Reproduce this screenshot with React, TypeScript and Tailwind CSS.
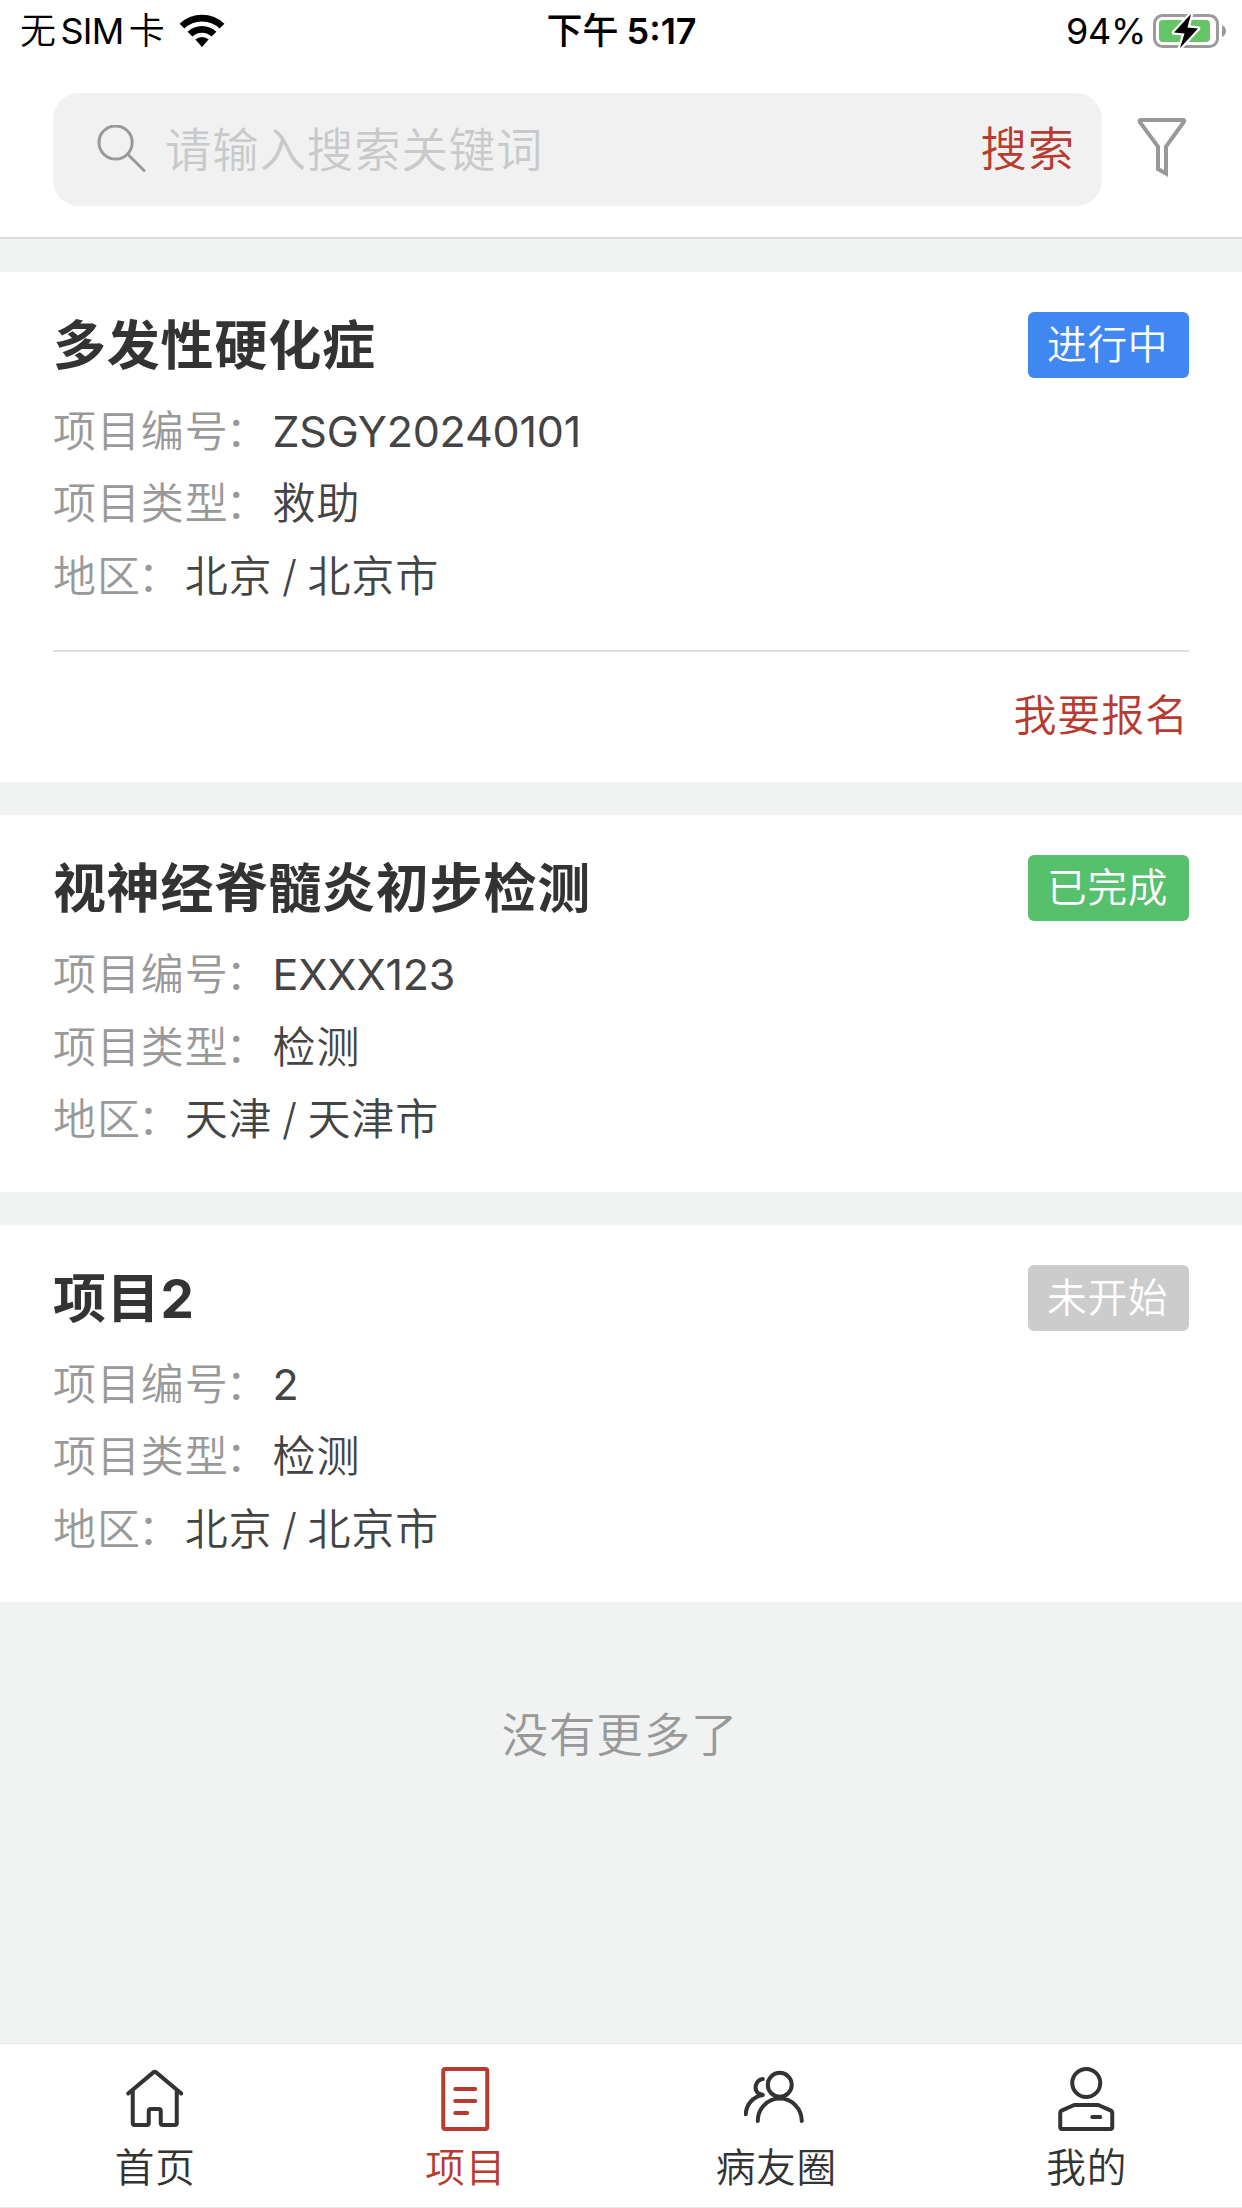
import React from 'react';

type ProjectStatus = 'ongoing' | 'finished' | 'pending';

interface Project {
    name: string;
    code: string;
    type: string;
    region: string;
    status: ProjectStatus;
    canApply?: boolean;
}

const projects: Project[] = [
    { name: '多发性硬化症', code: 'ZSGY20240101', type: '救助', region: '北京 / 北京市', status: 'ongoing', canApply: true },
    { name: '视神经脊髓炎初步检测', code: 'EXXX123', type: '检测', region: '天津 / 天津市', status: 'finished' },
    { name: '项目2', code: '2', type: '检测', region: '北京 / 北京市', status: 'pending' },
];

const statusMap: Record<ProjectStatus, { label: string; className: string }> = {
    ongoing: { label: '进行中', className: 'bg-[#4087f2]' },
    finished: { label: '已完成', className: 'bg-[#57c06c]' },
    pending: { label: '未开始', className: 'bg-[#cccccc]' },
};

const WifiIcon = () => (
    <svg width="46" height="34" viewBox="0 0 46 34" fill="currentColor">
        <path d="M0.6 9.8 A32 32 0 0 1 45.4 9.8 L40.6 14.6 A25.2 25.2 0 0 0 5.4 14.6 Z" />
        <path d="M8.6 17.8 A20.8 20.8 0 0 1 37.4 17.8 L32.6 22.6 A14 14 0 0 0 13.4 22.6 Z" />
        <path d="M16.4 25.6 A9.6 9.6 0 0 1 29.6 25.6 L23 33 Z" />
    </svg>
);

const BatteryIcon = () => (
    <svg width="74" height="36" viewBox="0 0 74 36">
        <rect x="1.5" y="2.5" width="63" height="31" rx="8" fill="none" stroke="#9b9b9b" strokeWidth="3" />
        <rect x="6" y="7" width="51" height="22" rx="4" fill="#65c466" />
        <path d="M69 12 Q73 14 73 18 Q73 22 69 24 Z" fill="#9b9b9b" />
        <path d="M38 1 L21 19.5 L31.5 20.5 L27 35 L45 15.5 L34.5 14.5 Z" fill="#000" stroke="#fff" strokeWidth="4.5" strokeLinejoin="round" paintOrder="stroke" />
    </svg>
);

const SearchIcon = () => (
    <svg width="50" height="50" viewBox="0 0 50 50" fill="none" stroke="#999" strokeWidth="3" strokeLinecap="round">
        <circle cx="18.6" cy="17.5" r="16.6" />
        <path d="M31 29.5 L47 45.5" />
    </svg>
);

const FilterIcon = () => (
    <svg width="50" height="62" viewBox="0 0 50 62" fill="none" stroke="#999" strokeWidth="4">
        <path d="M3.6 4 H46.2 Q48 4 46.8 6 L29 30.6 V57.5 L21 53 V30.6 L2.8 6 Q2 4 3.6 4 Z" />
    </svg>
);

const HomeIcon = () => (
    <svg width="64" height="72" viewBox="0 0 64 72" fill="none" stroke="currentColor" strokeWidth="4" strokeLinecap="round" strokeLinejoin="round">
        <path d="M5.2 31.5 L30.4 10.4 Q31.75 9.3 33.1 10.4 L58.3 31.5" />
        <path d="M9.75 29 V61 Q9.75 63 11.75 63 H23.75 Q25.75 63 25.75 61 V49 Q25.75 47 27.75 47 H35.75 Q37.75 47 37.75 49 V61 Q37.75 63 39.75 63 H51.75 Q53.75 63 53.75 61 V29" />
    </svg>
);

const ProjectIcon = () => (
    <svg width="64" height="72" viewBox="0 0 64 72" fill="none" stroke="currentColor" strokeWidth="4" strokeLinecap="round">
        <rect x="9.25" y="7" width="44" height="60" rx="2" />
        <path d="M21.25 27 H41.25 M21.25 39 H41.25 M21.25 51 H33.25" />
    </svg>
);

const FriendsIcon = () => (
    <svg width="64" height="72" viewBox="0 0 64 72" fill="none" stroke="currentColor" strokeWidth="4" strokeLinecap="round" strokeLinejoin="round">
        <circle cx="35.75" cy="22.8" r="12" />
        <path d="M13.75 59 A22 22.5 0 0 1 57.75 59" />
        <path d="M18.75 17 A8.3 8.3 0 0 0 14.4 31.4 L18.75 33 A20 20 0 0 0 1.75 52.3" />
    </svg>
);

const MineIcon = () => (
    <svg width="64" height="72" viewBox="0 0 64 72" fill="none" stroke="currentColor" strokeWidth="4" strokeLinecap="round" strokeLinejoin="round">
        <circle cx="31.25" cy="21" r="14" />
        <path d="M19.25 43 H43.25 L56 48.6 Q57.25 49.3 57.25 51 V65 Q57.25 67 55.25 67 H7.25 Q5.25 67 5.25 65 V51 Q5.25 49.3 6.5 48.6 Z" />
        <path d="M37.25 55 H45.25" />
    </svg>
);

const StatusBar = () => (
    <div className="flex h-[62px] items-center text-[36px] leading-[62px] text-black">
        <div className="flex flex-1 items-center pl-[20px]">
            <span className="tracking-[-0.8px] [word-spacing:-4px]">
                无 <span className="font-normal">SIM</span> 卡
            </span>
            <span className="ml-[15px]"><WifiIcon /></span>
        </div>
        <div className="mr-[4px] font-semibold [word-spacing:-1px]">
            <span className="font-medium">下午</span> 5:17
        </div>
        <div className="flex flex-1 items-center justify-end pr-[15px]">
            <span className="mr-[7px] font-normal tracking-[-0.3px]">94%</span>
            <BatteryIcon />
        </div>
    </div>
);

const SearchHeader = () => (
    <header className="flex h-[177px] items-start border-b-2 border-[#dcdcdc] bg-white pl-[53px] pt-[31px]">
        <div className="flex h-[113px] w-[1049px] items-center rounded-[26px] bg-[#f1f1f1] pl-[44px] pr-[27px]">
            <SearchIcon />
            <span className="ml-[18px] flex-1 pt-[2px] text-[46.4px] leading-[113px] tracking-[0.9px] text-[#c8c9cb]">请输入搜索关键词</span>
            <button className="text-[46.4px] leading-[109px] tracking-[0.9px] text-[#b83b30]">搜索</button>
        </div>
        <button className="ml-[35px] mt-[23px]"><FilterIcon /></button>
    </header>
);

const Field = ({ label, value, latin }: { label: string; value: string; latin?: boolean }) => (
    <div className="flex h-[72.6px] items-center text-[43px] leading-[72px]">
        <span className="tracking-[0.9px] text-[#999]">
            {label}
            <span className="-ml-[3px] mr-[3px]">：</span>
        </span>
        <span className={`text-[#444] ${latin ? 'font-normal tracking-[-0.2px]' : 'tracking-[0.9px] [word-spacing:-3.5px]'}`}>{value}</span>
    </div>
);

const ProjectCard = ({ project }: { project: Project }) => {
    const status = statusMap[project.status];

    return (
        <section className="bg-white px-[53px] pb-[36.2px] pt-[39.6px]">
            <div className="flex h-[66px] items-center justify-between">
                <h2 className="pt-[2px] text-[53px] font-bold leading-[66px] tracking-[0.8px] text-[#333]">{project.name}</h2>
                <span className={`h-[66px] w-[161px] rounded-[6px] pl-[19px] text-[39.7px] leading-[66px] tracking-[0.7px] text-white ${status.className}`}>
                    {status.label}
                </span>
            </div>
            <div className="mt-[17px]">
                <Field label="项目编号" value={project.code} latin />
                <Field label="项目类型" value={project.type} />
                <Field label="地区" value={project.region} />
            </div>
            {project.canApply && (
                <div className="mt-[38px] -mb-[36.2px] flex h-[132px] justify-end border-t-2 border-[#dedede]">
                    <button className="h-[127px] text-[43px] leading-[127px] tracking-[0.9px] text-[#b83b30]">我要报名</button>
                </div>
            )}
        </section>
    );
};

const tabs = [
    { label: '首页', icon: HomeIcon },
    { label: '项目', icon: ProjectIcon, active: true },
    { label: '病友圈', icon: FriendsIcon },
    { label: '我的', icon: MineIcon },
];

const TabBar = () => (
    <nav className="grid h-[165px] grid-cols-4 border-b border-t border-[#e6e6e6] bg-white">
        {tabs.map(({ label, icon: Icon, active }) => (
            <a key={label} className={`flex flex-col items-center pt-[18px] ${active ? 'text-[#b83b30]' : 'text-[#333]'}`}>
                <Icon />
                <span className="text-[39.7px] leading-[69px] tracking-[0.7px]">{label}</span>
            </a>
        ))}
    </nav>
);

export default function App() {
    return (
        <div className="flex h-[2208px] w-[1242px] flex-col overflow-hidden bg-[#f1f3f3] font-['Inter','Noto_Sans_CJK_SC',sans-serif] font-[350]">
            <div className="bg-white">
                <StatusBar />
                <SearchHeader />
            </div>
            <main className="flex flex-1 flex-col gap-[33px] pt-[33px]">
                {projects.map((project) => (
                    <ProjectCard key={project.code} project={project} />
                ))}
                <p className="mt-[67px] pr-[2px] text-center text-[46.4px] leading-[66px] tracking-[0.9px] text-[#999]">没有更多了</p>
            </main>
            <TabBar />
        </div>
    );
}
